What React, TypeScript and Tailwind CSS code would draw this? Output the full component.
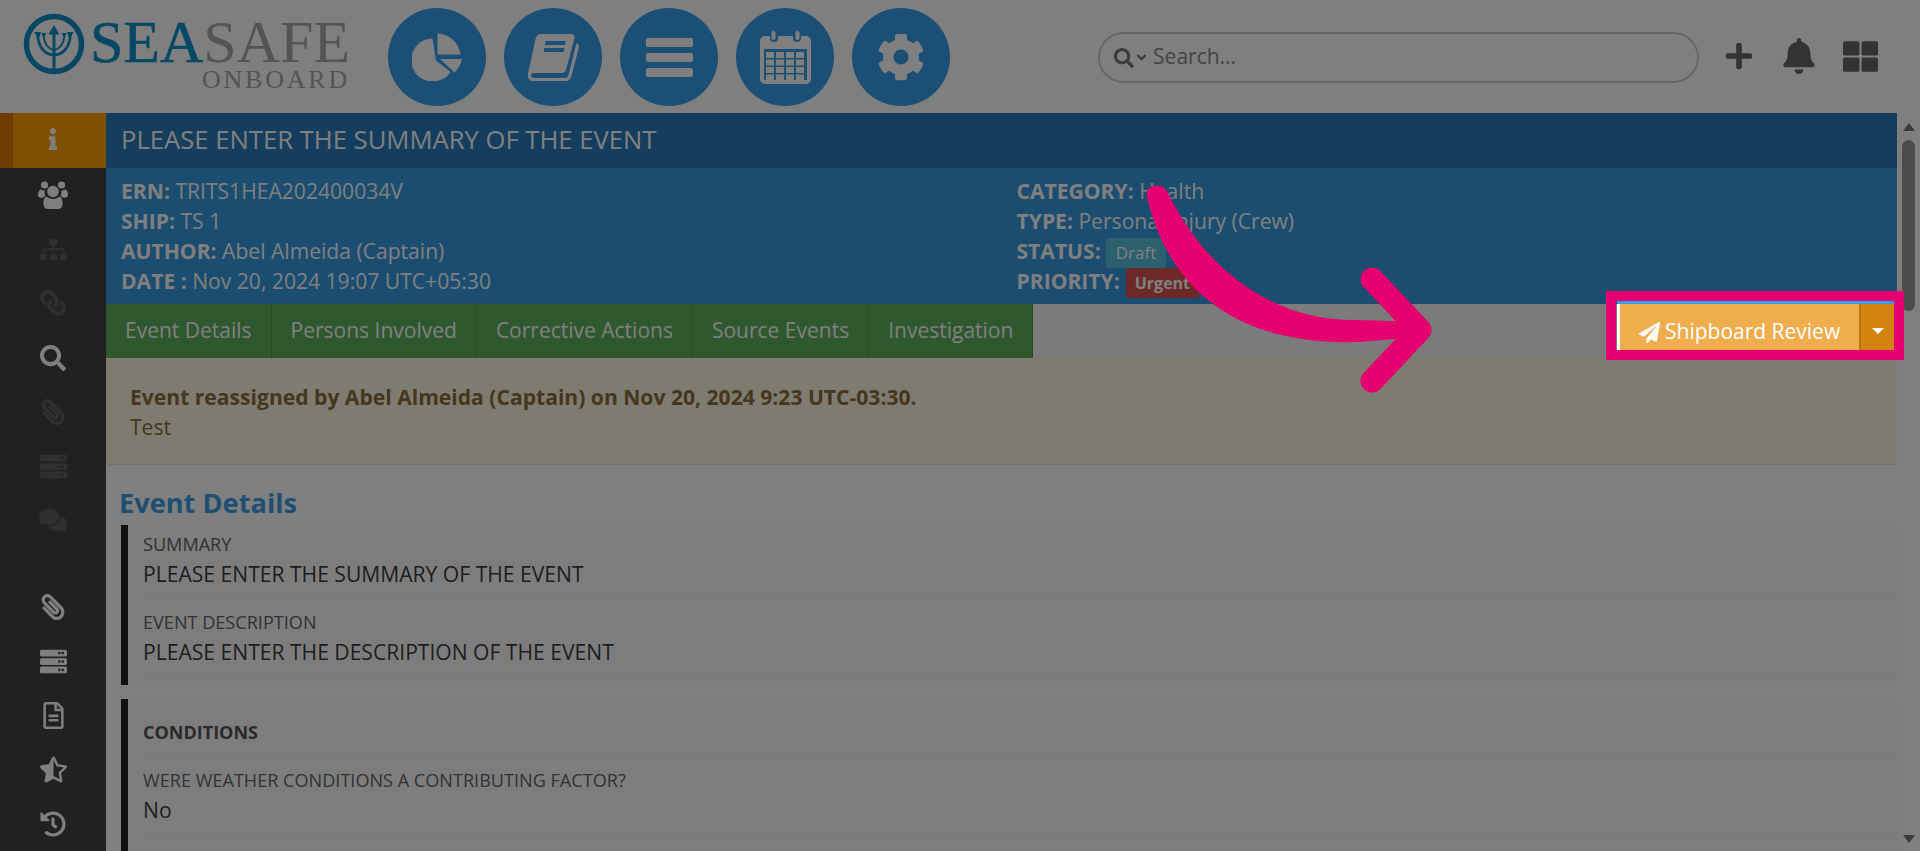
import React from 'react';
import {
  FaAngleDown,
  FaBell,
  FaCog,
  FaComments,
  FaHistory,
  FaInfo,
  FaLink,
  FaPaperPlane,
  FaPaperclip,
  FaPlus,
  FaRegFileAlt,
  FaSearch,
  FaServer,
  FaSitemap,
  FaStarHalfAlt,
  FaThLarge,
} from 'react-icons/fa';

const SANS = "font-['Open_Sans','Noto_Sans',sans-serif]";

function Logo() {
  return (
    <div className="flex items-start">
      <svg width="62" height="62" viewBox="0 0 62 62" className="mt-[13px] shrink-0">
        <circle cx="31" cy="31" r="27.5" fill="none" stroke="#0d8fc9" strokeWidth="5.5" />
        <path d="M31 12l-5.500 9.500h11z" fill="#0d8fc9" />
        <path d="M31 19v40" stroke="#0d8fc9" strokeWidth="3" />
        <path d="M14.500 21C15 34 22 42 31 42S47 34 47.500 21" fill="none" stroke="#0d8fc9" strokeWidth="2.800" />
        <path d="M20.500 23C21.500 31 25 36 31 37M41.500 23C40.500 31 37 36 31 37" fill="none" stroke="#0d8fc9" strokeWidth="2" />
        <path d="M11 19l7 0-2 6zM51 19l-7 0 2 6zM18 20l5.500 0-2.500 5zM44 20l-5.500 0 2.500 5z" fill="#0d8fc9" />
      </svg>
      <div className="ml-[5px] mt-[17px] flex flex-col font-['Liberation_Serif',serif]">
        <div className="text-[60px] leading-[50px] whitespace-nowrap">
          <span className="text-[#0d8fc9] [-webkit-text-stroke:0.6px_#0d8fc9]">SEA</span>
          <span className="text-[#a8a8a8]">SAFE</span>
        </div>
        <div className="text-right text-[26px] leading-[26px] tracking-[2.8px] text-[#a8a8a8]">ONBOARD</div>
      </div>
    </div>
  );
}

function NavCircle({ children }: { children: React.ReactNode }) {
  return (
    <div className="flex h-[98px] w-[98px] shrink-0 items-center justify-center rounded-full bg-[#369fec] text-white">
      {children}
    </div>
  );
}

function PieIcon() {
  return (
    <svg width="50" height="48" viewBox="0 0 50 48" fill="currentColor">
      <path d="M20.5 5.5A21.5 21.5 0 1 0 38.5 39L24 27.5z" />
      <path d="M25.5 0.5A24 24 0 0 1 48.5 21.5H25.5z" />
      <path d="M28 26h22a25 25 0 0 1-7.5 13.5z" />
    </svg>
  );
}

function BookIcon() {
  return (
    <svg width="52" height="48" viewBox="0 0 52 48" fill="currentColor">
      <path d="M14 1h30c3 0 4 2 3.400 4.500L39 37c-.6 2-2 3-4 3H7c-2 0-3 1-3 2.500S5 45 7 45h31c2 0 3-1 3.500-3L49.500 10c2 1 2.800 2.500 2.200 5L44.500 43c-.8 3-3 5-6 5H7c-4.500 0-7-3-6-7.500L8.500 6C9.300 3 11 1 14 1z" />
      <path d="M19 8h20l-1 4H18zM17.500 15h20l-1 4h-20z" fill="#369fec" />
    </svg>
  );
}

function BarsIcon() {
  return (
    <svg width="47" height="39" viewBox="0 0 47 39" fill="currentColor">
      <rect x="0" y="0" width="47" height="9" rx="2" />
      <rect x="0" y="15" width="47" height="9" rx="2" />
      <rect x="0" y="30" width="47" height="9" rx="2" />
    </svg>
  );
}

function CalendarIcon() {
  const cells: React.ReactNode[] = [];
  for (let r = 0; r < 4; r++) {
    for (let c = 0; c < 4; c++) {
      cells.push(<rect key={`${r}-${c}`} x={6 + c * 10} y={21 + r * 7.5} width="8" height="6" />);
    }
  }
  return (
    <svg width="51" height="53" viewBox="0 0 51 53" fill="currentColor">
      <path
        fillRule="evenodd"
        d="M5 5h5v2a4 4 0 0 0 8 0V5h15v2a4 4 0 0 0 8 0V5h5c2.500 0 5 2 5 5v38c0 3-2.500 5-5 5H5c-2.500 0-5-2-5-5V10c0-3 2.500-5 5-5zM4 18v31h43V18z"
      />
      <rect x="11.500" y="0" width="4" height="9" rx="2" />
      <rect x="35.500" y="0" width="4" height="9" rx="2" />
      {cells}
    </svg>
  );
}

function UsersIcon() {
  return (
    <svg width="30" height="28" viewBox="0 0 30 28" fill="currentColor">
      <circle cx="6.500" cy="4" r="3.600" />
      <circle cx="23.500" cy="4" r="3.600" />
      <path d="M0 14c0-3.500 1.500-5.500 3-5.500 1 .8 2.500 1.200 3.800 1.100-.5 1.800-.3 4 .7 5.400-1.200.4-2.100 1-2.700 1.800C2 16.800 0 16.300 0 14z" />
      <path d="M30 14c0-3.500-1.500-5.500-3-5.500-1 .8-2.500 1.200-3.800 1.100.5 1.800.3 4-.7 5.400 1.200.4 2.100 1 2.700 1.800 2.800 0 4.800-.5 4.800-2.800z" />
      <circle cx="15" cy="10.500" r="5.800" />
      <path d="M8.600 15.500c1.500 1.500 3.900 2.400 6.400 2.400s4.900-.9 6.400-2.400c1.800.4 3.200 2.800 3.200 7.400 0 3.400-2 5.100-4.800 5.100H10.200c-2.800 0-4.800-1.700-4.800-5.100 0-4.600 1.400-7 3.200-7.400z" />
    </svg>
  );
}

function SideIcon({
  children,
  active,
  dim,
}: {
  children: React.ReactNode;
  active?: boolean;
  dim?: boolean;
}) {
  return (
    <div
      className={`flex shrink-0 items-center justify-center ${
        active
          ? 'h-[55px] border-l-[13px] border-[#dd7700] bg-[#ffa000] pb-[3px] pr-[13px] text-white'
          : dim
            ? 'h-[54.2px] text-[#5f5f5f]'
            : 'h-[54.2px] text-white'
      }`}
    >
      {children}
    </div>
  );
}

function Field({ label, value, first }: { label: string; value: string; first?: boolean }) {
  return (
    <div className={`border-b border-[#f0f0f0] ${first ? 'pb-[8px] pt-[7px]' : 'pb-[7px] pt-[12px]'}`}>
      <div className="text-[18.1px] leading-[24px] text-[#666]">{label}</div>
      <div className="mt-[3px] text-[21.1px] leading-[30px] text-[#3d3d3d]">{value}</div>
    </div>
  );
}

export default function App() {
  const tabs = ['Event Details', 'Persons Involved', 'Corrective Actions', 'Source Events', 'Investigation'];

  return (
    <div className={`relative h-[851px] w-[1920px] overflow-hidden bg-white ${SANS}`}>
      {/* header */}
      <header className="flex h-[113px] items-start pl-[23px]">
        <Logo />
        <div className="ml-[38px] mt-[8px] flex gap-[18px]">
          <NavCircle>
            <PieIcon />
          </NavCircle>
          <NavCircle>
            <BookIcon />
          </NavCircle>
          <NavCircle>
            <BarsIcon />
          </NavCircle>
          <NavCircle>
            <CalendarIcon />
          </NavCircle>
          <NavCircle>
            <FaCog size={48} />
          </NavCircle>
        </div>
        <div className="ml-[148px] mt-[32px] flex h-[51px] w-[601px] items-center rounded-full border-2 border-[#ccc] pl-[14px] text-[#777]">
          <FaSearch size={20} />
          <FaAngleDown size={15} />
          <span className="ml-[4px] -mt-[2px] text-[21px] text-[#888]">Search...</span>
        </div>
        <div className="ml-[25px] mt-[38px] flex items-center text-[#666]">
          <FaPlus size={30} />
          <FaBell size={36} className="ml-[27px]" />
          <FaThLarge size={35} className="ml-[26px]" />
        </div>
      </header>

      <div className="flex h-[738px]">
        {/* sidebar */}
        <aside className="flex w-[106px] shrink-0 flex-col bg-[#424242]">
          <SideIcon active>
            <FaInfo size={22} />
          </SideIcon>
          <SideIcon>
            <UsersIcon />
          </SideIcon>
          <SideIcon dim>
            <FaSitemap size={27} />
          </SideIcon>
          <SideIcon dim>
            <FaLink size={26} className="-scale-x-100" />
          </SideIcon>
          <SideIcon>
            <FaSearch size={26} />
          </SideIcon>
          <SideIcon dim>
            <FaPaperclip size={26} className="-scale-x-100" />
          </SideIcon>
          <SideIcon dim>
            <FaServer size={27} />
          </SideIcon>
          <SideIcon dim>
            <FaComments size={28} />
          </SideIcon>
          <div className="h-[33px] shrink-0" />
          <SideIcon>
            <FaPaperclip size={26} className="-scale-x-100" />
          </SideIcon>
          <SideIcon>
            <FaServer size={27} />
          </SideIcon>
          <SideIcon>
            <FaRegFileAlt size={27} />
          </SideIcon>
          <SideIcon>
            <FaStarHalfAlt size={27} />
          </SideIcon>
          <SideIcon>
            <FaHistory size={26} />
          </SideIcon>
        </aside>

        {/* content */}
        <main className="min-w-0 flex-1 overflow-hidden">
          <div className="flex h-[55px] items-center bg-[#287abc] px-[15px] text-[25.65px] text-white">
            PLEASE ENTER THE SUMMARY OF THE EVENT
          </div>
          <div className="grid h-[136px] grid-cols-2 bg-[#369ae0] px-[15px] pt-[8px] text-[21.1px] leading-[30px] text-white">
            <div>
              <div>
                <b>ERN:</b> TRITS1HEA202400034V
              </div>
              <div>
                <b>SHIP:</b> TS 1
              </div>
              <div>
                <b>AUTHOR:</b> Abel Almeida (Captain)
              </div>
              <div>
                <b>DATE :</b> Nov 20, 2024 19:07 UTC+05:30
              </div>
            </div>
            <div className="pl-[15px]">
              <div>
                <b>CATEGORY:</b> Health
              </div>
              <div>
                <b>TYPE:</b> Personal Injury (Crew)
              </div>
              <div className="flex h-[30px] items-start">
                <b>STATUS:</b>
                <span className="ml-[5px] mt-[2px] rounded-[3px] bg-[#5bc0de] px-[10px] text-[17px] leading-[30px]">Draft</span>
              </div>
              <div className="flex h-[30px] items-start">
                <b>PRIORITY:</b>
                <span className="ml-[6px] mt-[2px] rounded-[3px] bg-[#d9534f] px-[9px] text-[16px] font-bold leading-[30px]">
                  Urgent
                </span>
              </div>
            </div>
          </div>

          <div className="flex h-[54px] items-start justify-between bg-[#f7f7f7]">
            <div className="flex">
              {tabs.map((tab) => (
                <div
                  key={tab}
                  className="flex h-[54px] items-center border-r border-[#4a9a4a] bg-[#5cb05c] px-[19px] text-[21px] text-white"
                >
                  {tab}
                </div>
              ))}
            </div>
            <div className="relative z-20 mr-[2px] -mt-[3px] flex h-[49px] w-[278px] border-t-[3px] border-[#2f9fe8] text-white">
              <div className="flex flex-1 items-center border-l-[3px] border-white bg-[#f0ad4e] pl-[19px] pt-[10px] text-[21px]">
                <FaPaperPlane size={21} />
                <span className="ml-[5px]">Shipboard Review</span>
              </div>
              <div className="flex w-[36px] items-center justify-center border-l-2 border-[#b87510] bg-[#d2840f] pt-[8px]">
                <div className="h-0 w-0 border-x-[6px] border-t-[6px] border-x-transparent border-t-white" />
              </div>
            </div>
          </div>

          <div className="h-[107px] rounded-b-[4px] border-b border-[#e8e4cc] bg-[#fcf8e3] px-[24px] pt-[24px] text-[21.1px] leading-[30px] text-[#8a6d3b]">
            <b>Event reassigned by Abel Almeida (Captain) on Nov 20, 2024 9:23 UTC-03:30.</b>
            <div>Test</div>
          </div>

          <h2 className="ml-[13px] mt-[20px] text-[27.2px] font-bold leading-[36px] text-[#3d9fe6]">Event Details</h2>

          <div className="ml-[15px] mt-[4px] border-l-[7px] border-[#222] bg-[#fbfbfb] pb-[10px] pl-[15px]">
            <Field first label="SUMMARY" value="PLEASE ENTER THE SUMMARY OF THE EVENT" />
            <Field label="EVENT DESCRIPTION" value="PLEASE ENTER THE DESCRIPTION OF THE EVENT" />
          </div>

          <div className="ml-[15px] mt-[14px] border-l-[7px] border-[#222] bg-[#fbfbfb] pl-[15px]">
            <div className="border-b border-[#f0f0f0] pb-[11px] pt-[21px] text-[18px] font-bold leading-[24px] text-[#555]">
              CONDITIONS
            </div>
            <Field label="WERE WEATHER CONDITIONS A CONTRIBUTING FACTOR?" value="No" />
            <div className="h-[40px]" />
          </div>
        </main>

        {/* scrollbar */}
        <div className="flex w-[23px] shrink-0 flex-col items-center justify-between bg-white pb-[8px] pt-[10px]">
          <div className="flex flex-col items-center">
            <div className="h-0 w-0 border-x-[6px] border-b-[8px] border-x-transparent border-b-[#777]" />
            <div className="mt-[9px] h-[171px] w-[13px] rounded-full bg-[#999]" />
          </div>
          <div className="h-0 w-0 border-x-[6px] border-t-[8px] border-x-transparent border-t-[#777]" />
        </div>
      </div>

      {/* tour overlay */}
      <div className="absolute inset-0 z-10 bg-black/50" />
      <div className="absolute left-[1606px] top-[291px] z-30 h-[69px] w-[298px] border-[10px] border-[#e6006f]" />
      <svg className="absolute left-0 top-0 z-30" width="1920" height="851" viewBox="0 0 1920 851">
        <path
          d="M1147 197C1165 275 1222 346 1358 342L1420 337V322L1358 320C1275 322 1205 270 1168 193C1163 181 1144 184 1147 197Z"
          fill="#e6006f"
        />
        <path
          d="M1372 279L1420 330L1372 381"
          fill="none"
          stroke="#e6006f"
          strokeWidth="23"
          strokeLinecap="round"
          strokeLinejoin="round"
        />
      </svg>
    </div>
  );
}
